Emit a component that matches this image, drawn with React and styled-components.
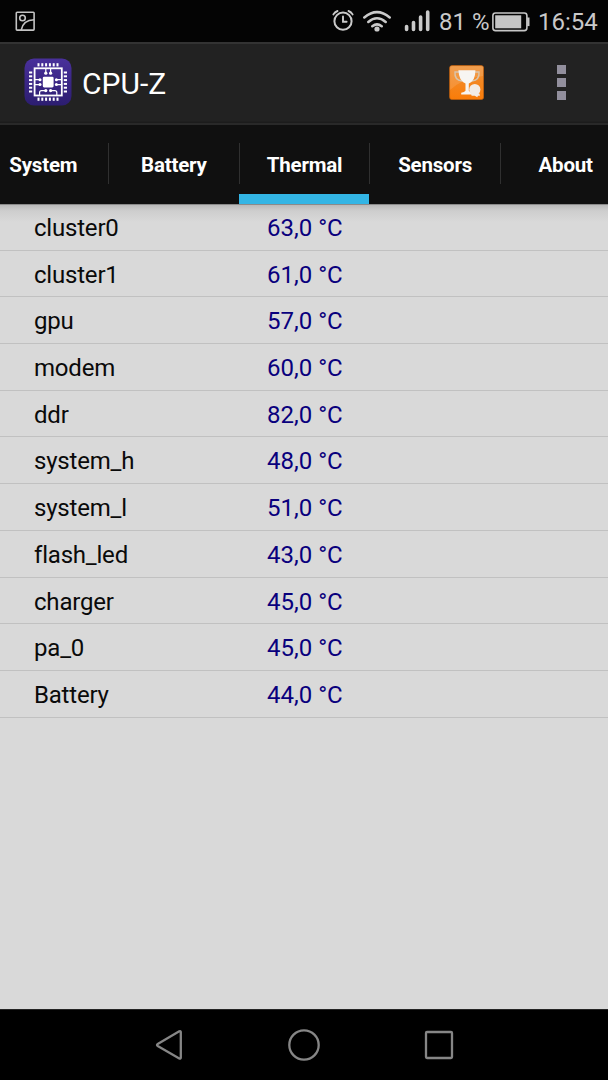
import styled, { createGlobalStyle } from "styled-components";

const GlobalStyle = createGlobalStyle`
    * {
        box-sizing: border-box;
    }

    body {
        margin: 0;
        background: #000;
        font-family: Roboto, sans-serif;
    }
`;

const Screen = styled.div`
    width: 608px;
    height: 1080px;
    display: flex;
    flex-direction: column;
    overflow: hidden;
    background: #d9d9d9;
`;

const StatusBar = styled.header`
    flex: 0 0 42px;
    display: flex;
    align-items: center;
    padding: 0 10px 0 15px;
    background: #040404;
    color: #c9c9c9;
    font-size: 24px;
    line-height: 40px;
    white-space: pre;

    svg {
        display: block;
        flex: none;
    }
`;

const StatusIcons = styled.div`
    display: flex;
    align-items: center;
    margin-left: auto;
`;

const StatusText = styled.span`
    padding-top: 2px;
`;

const BatteryLevel = styled(StatusText)`
    width: 53px;
    margin-left: 9px;
`;

const Clock = styled(StatusText)`
    width: 60px;
    margin-left: 8px;
`;

const ActionBar = styled.div`
    flex: 0 0 83px;
    display: flex;
    align-items: center;
    padding: 0 42px 5px 24px;
    background: linear-gradient(#222 0 77px, #1c1c1c 78px 79px, #292929 79px);
    border-top: 2px solid #333;

    svg {
        display: block;
        flex: none;
    }
`;

const Title = styled.h1`
    flex: 1;
    margin: 0 0 0 10px;
    padding-top: 4px;
    color: #fff;
    font-size: 30px;
    font-weight: 400;
    line-height: 40px;
`;

const MenuButton = styled.div`
    width: 9px;
    display: grid;
    gap: 4px;
    margin-left: 73px;
`;

const MenuDot = styled.span`
    height: 9px;
    background: #928f9d;
`;

const Tabs = styled.nav`
    flex: 0 0 79px;
    display: flex;
    justify-content: center;
    background: #101010;
`;

const Tab = styled.div`
    flex: 0 0 130.6px;
    display: flex;
    flex-direction: column;
    padding-top: 18px;
    border-bottom: ${({ $active }) => ($active ? "10px solid #33b5e5" : "none")};
`;

const TabLabel = styled.span`
    height: 41px;
    border-left: 1px solid #303030;
    color: #fff;
    font-size: 20.5px;
    font-weight: 700;
    line-height: 44px;
    letter-spacing: -0.2px;
    text-align: center;
`;

const SensorList = styled.main`
    flex: 1;
    background: linear-gradient(#8a8a8a 1px, #b9b9b9 1px, #cecece 7px, #d9d9d9 18px);
`;

const SensorRow = styled.div`
    height: 46.7px;
    display: grid;
    grid-template-columns: 233px 1fr;
    padding-left: 34px;
    border-bottom: 1px solid #c1c1c1;
    color: #0a0a0a;
    font-size: 24px;
    line-height: 49px;
`;

const SensorName = styled.span`
    letter-spacing: -0.2px;
`;

const Temperature = styled.span`
    color: #09007d;
`;

const NavigationBar = styled.footer`
    flex: 0 0 71px;
    display: flex;
    justify-content: center;
    align-items: center;
    gap: 95px;
    background: #000;
    border-top: 1px solid #242424;
`;

const tabs = ["System", "Battery", "Thermal", "Sensors", "About"];

const sensors = [
    { name: "cluster0", value: "63,0 °C" },
    { name: "cluster1", value: "61,0 °C" },
    { name: "gpu", value: "57,0 °C" },
    { name: "modem", value: "60,0 °C" },
    { name: "ddr", value: "82,0 °C" },
    { name: "system_h", value: "48,0 °C" },
    { name: "system_l", value: "51,0 °C" },
    { name: "flash_led", value: "43,0 °C" },
    { name: "charger", value: "45,0 °C" },
    { name: "pa_0", value: "45,0 °C" },
    { name: "Battery", value: "44,0 °C" },
];

const PictureIcon = () => (
    <svg width="20" height="20" fill="none" stroke="#c4c4c4" strokeWidth="1.6">
        <rect x="1.3" y="1.3" width="17.8" height="17.8" rx=".8" />
        <circle cx="7.5" cy="7" r="2.8" />
        <path d="M6.2 19C7.5 12.5 12 9 19 8.8" />
    </svg>
);

const SignalIcons = () => (
    <svg width="98" height="26" fill="none" stroke="#cacaca" strokeLinecap="round">
        <circle cx="11" cy="13.2" r="8.6" strokeWidth="2" />
        <path d="M11 8.4v5.4h3.6M1.4 6.4Q2.8 3.9 5.5 3M16.5 3q2.7.9 4.1 3.4" strokeWidth="1.9" />
        <path d="M32.3 9.5q12.7-10.8 25.4 0M36.3 14q8.7-7.4 17.4 0M40.3 18.2q4.7-3.6 9.4 0" strokeWidth="2.5" />
        <circle cx="45" cy="21" r="2.6" fill="#cacaca" stroke="none" />
        <path d="M74.6 18.5v3M81.5 14.5v7M88.6 9v12.5M95.7 4v17.5" strokeWidth="3.6" />
    </svg>
);

const BatteryIcon = () => (
    <svg width="38" height="22" viewBox="0 -2 38 22" fill="none">
        <rect x=".9" y="1" width="34" height="17.6" rx="2.6" stroke="#c6c6c6" strokeWidth="1.6" />
        <path d="M36.3 5.5v8.6" stroke="#c6c6c6" strokeWidth="2.4" />
        <rect x="3.2" y="3.3" width="26" height="13" fill="#c6c6c6" />
    </svg>
);

const pins = [14.2, 18, 21.8, 25.6, 29.4, 33.2];

const LogoIcon = () => (
    <svg width="48" height="48" viewBox="0 0 48 48">
        <defs>
            <linearGradient id="logo" x2="0" y2="1">
                <stop stopColor="#49309b" />
                <stop offset="1" stopColor="#2c1d70" />
            </linearGradient>
        </defs>
        <rect x=".5" y=".5" width="47" height="47" rx="9.5" fill="url(#logo)" />
        <g fill="#fff">
            {pins.map((p) => (
                <g key={p}>
                    <rect x={p - 0.7} y="5.2" width="2" height="3.2" />
                    <rect x={p - 0.7} y="39.6" width="2" height="3.2" />
                    <rect x="5" y={p - 0.7} width="3.2" height="2" />
                    <rect x="39.8" y={p - 0.7} width="3.2" height="2" />
                </g>
            ))}
            <rect x="18.8" y="18.7" width="10.8" height="10.8" rx="1.4" />
            <circle cx="21.8" cy="15.2" r="1.6" />
            <circle cx="26.6" cy="15.2" r="1.6" />
            <circle cx="21.8" cy="32.6" r="1.6" />
            <circle cx="26.6" cy="32.6" r="1.6" />
            {[21.7, 26.6].map((y) => (
                <g key={y}>
                    <circle cx="16" cy={y} r="1.5" />
                    <circle cx="32.4" cy={y} r="1.5" />
                </g>
            ))}
        </g>
        <rect x="10.6" y="10.3" width="27.2" height="27.2" fill="none" stroke="#fff" strokeWidth="1.8" />
        <path
            d="M21.8 10.5V15M26.6 10.5V15M10.5 21.7H16M10.5 26.6H16M32.4 21.7H38M32.4 26.6H38M21.8 32.6H17.6q-2 0-2 2V37M26.6 32.6h4.2q2 0 2 2V37"
            fill="none"
            stroke="#fff"
            strokeWidth="1.2"
        />
    </svg>
);

const TrophyIcon = () => (
    <svg width="35" height="35" viewBox="0 0 35 35">
        <defs>
            <linearGradient id="trophy" x2="0" y2="1">
                <stop stopColor="#ee9138" />
                <stop offset="1" stopColor="#fa7c08" />
            </linearGradient>
        </defs>
        <rect x=".6" y=".6" width="34" height="34" rx="2.5" fill="url(#trophy)" stroke="#c7610c" strokeWidth=".7" />
        <path d="M1 1h33v10Q14 13 1 25Z" fill="#fff" opacity=".12" />
        <path d="M10.5 7H6q-.8 8 7 9M25.5 7H30q.8 8-7 9" fill="none" stroke="#d9c5ad" strokeWidth="1.4" />
        <path d="M9.4 5.2h17q0 10.7-6.6 13.2v7.4q1 1.8 4.2 2v1.7H12.2v-1.7q3.4-.5 4.3-2v-7.4Q10 16 9.4 5.2Z" fill="#f7f5f2" />
        <circle cx="25.8" cy="24.5" r="5.6" fill="#f2ece6" />
        <path d="M22 28.5h8.5l.4 2.2h-2l-.6 1.5-2.5-1.5h-3.2Z" fill="#f2ece6" />
    </svg>
);

const NavIcon = ({ children }) => (
    <svg width="40" height="40" fill="none" stroke="#868686" strokeWidth="2.3" strokeLinejoin="round">
        {children}
    </svg>
);

const App = () => (
    <>
        <GlobalStyle />
        <Screen>
            <StatusBar>
                <PictureIcon />
                <StatusIcons>
                    <SignalIcons />
                    <BatteryLevel>81 %</BatteryLevel>
                    <BatteryIcon />
                    <Clock>16:54</Clock>
                </StatusIcons>
            </StatusBar>

            <ActionBar>
                <LogoIcon />
                <Title>CPU-Z</Title>
                <TrophyIcon />
                <MenuButton>
                    <MenuDot />
                    <MenuDot />
                    <MenuDot />
                </MenuButton>
            </ActionBar>

            <Tabs>
                {tabs.map((tab) => (
                    <Tab key={tab} $active={tab === "Thermal"}>
                        <TabLabel>{tab}</TabLabel>
                    </Tab>
                ))}
            </Tabs>

            <SensorList>
                {sensors.map((sensor) => (
                    <SensorRow key={sensor.name}>
                        <SensorName>{sensor.name}</SensorName>
                        <Temperature>{sensor.value}</Temperature>
                    </SensorRow>
                ))}
            </SensorList>

            <NavigationBar>
                <NavIcon>
                    <path d="M8.7 19 30.3 6.3q1.5-.7 1.5.8v25.5q0 1.5-1.5.8L8.7 21q-1.4-1 0-2Z" />
                </NavIcon>
                <NavIcon>
                    <circle cx="20" cy="20" r="14.7" />
                </NavIcon>
                <NavIcon>
                    <rect x="7" y="7" width="26" height="26" rx="1" />
                </NavIcon>
            </NavigationBar>
        </Screen>
    </>
);

export default App;
